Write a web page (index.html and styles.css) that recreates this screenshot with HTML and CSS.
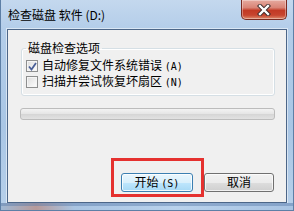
FILE: index.html
```html
<!DOCTYPE html>
<html lang="zh-CN">
<head>
<meta charset="utf-8">
<title>检查磁盘 软件 (D:)</title>
<link rel="stylesheet" href="styles.css">
</head>
<body>
<div class="window">
  <div class="titlebar">
    <span class="title">检查磁盘 软件 (D:)</span>
    <button class="close" aria-label="关闭">
      <svg width="16" height="12" viewBox="0 0 16 12">
        <path d="M4 2 L12 10 M12 2 L4 10" stroke="#3a2a2a" stroke-width="4.2" stroke-linecap="square" fill="none"/>
        <path d="M4 2 L12 10 M12 2 L4 10" stroke="#ffffff" stroke-width="2.4" stroke-linecap="square" fill="none"/>
      </svg>
    </button>
  </div>
  <div class="client">
    <fieldset class="group">
      <legend>磁盘检查选项</legend>
      <label class="check-row">
        <span class="box checked">
          <svg width="9" height="9" viewBox="0 0 9 9"><path d="M1 4.5 L3.5 7.5 L8 1" stroke="#4a5f97" stroke-width="1.8" fill="none"/></svg>
        </span>
        <span class="label">自动修复文件系统错误 <span class="key">(A)</span></span>
      </label>
      <label class="check-row">
        <span class="box"></span>
        <span class="label">扫描并尝试恢复坏扇区 <span class="key">(N)</span></span>
      </label>
    </fieldset>
    <div class="progress"></div>
    <div class="spacer"></div>
    <div class="buttons">
      <div class="highlight-wrap">
        <button class="btn default">开始 <span class="key">(S)</span></button>
        <div class="highlight"></div>
      </div>
      <button class="btn">取消</button>
    </div>
  </div>
  <div class="bottom-frame"></div>
</div>
</body>
</html>
```
FILE: styles.css
```css
html, body {
  margin: 0;
  padding: 0;
}
body {
  width: 294px;
  height: 211px;
  overflow: hidden;
  font-family: "Noto Sans CJK SC", "Liberation Sans", sans-serif;
  font-size: 12px;
  color: #000;
}
.window {
  box-sizing: border-box;
  width: 294px;
  height: 211px;
  display: flex;
  flex-direction: column;
  padding: 0 6px 0 6px;
  border: 1px solid #5d7fa6;
  border-top: none;
  background:
    linear-gradient(180deg, #c4d8ee 0%, #b3cde9 14%, #a9c6e5 60%, #b7d0ea 100%);
}
.titlebar {
  height: 29px;
  display: flex;
  align-items: flex-start;
  position: relative;
}
.title {
  margin-top: 8px;
  margin-left: 1px;
  line-height: 14px;
  color: #000;
  font-size: 12px;
}
.close {
  margin-left: auto;
  margin-right: 0;
  width: 46px;
  height: 20px;
  padding: 0;
  border: 1px solid #7a2b22;
  border-top: none;
  border-radius: 0 0 5px 5px;
  background: linear-gradient(180deg, #e6aa9f 0%, #d98476 40%, #c23a25 55%, #c7452f 80%, #dc8c6e 100%);
  display: flex;
  align-items: center;
  justify-content: center;
  box-shadow: inset 0 0 0 1px rgba(255,255,255,0.35);
}
.close svg {
  display: block;
}
.client {
  flex: 1;
  display: flex;
  flex-direction: column;
  background: #f0f0f0;
  border: 1px solid #4c6688;
  box-shadow: 0 0 0 1px rgba(255,255,255,0.5);
}
.bottom-frame {
  height: 7px;
  margin: 0 -6px;
  background: linear-gradient(90deg, #9fb8d4 0%, #b79a9a 12%, #a9c4e2 25%, #b9d2ec 60%, #a8c3e2 100%);
  box-shadow: inset 0 3px 0 rgba(90,125,170,0.45);
}
.group {
  margin: 11px 11px 0 13px;
  padding: 3px 4px 5px 4px;
  border: 1px solid #d5dfe5;
  border-radius: 3px;
  box-shadow: inset 0 0 0 1px #ffffff;
  min-width: 0;
}
.group legend {
  padding: 0 2px;
  line-height: 14px;
  font-size: 12px;
}
.check-row {
  display: flex;
  align-items: center;
  height: 16px;
  gap: 4px;
}
.box {
  box-sizing: border-box;
  width: 12px;
  height: 12px;
  border: 1px solid #8e8f8f;
  background: linear-gradient(135deg, #dcdcdc 0%, #f4f4f4 70%, #ffffff 100%);
  box-shadow: inset 0 0 0 1px #f5f5f5;
  display: flex;
  align-items: center;
  justify-content: center;
}
.box svg {
  display: block;
}
.label {
  line-height: 14px;
  white-space: nowrap;
}
.key {
  font-family: "DejaVu Sans Mono", "Liberation Mono", monospace;
  font-size: 10px;
}
.progress {
  margin: 12px 11px 0 12px;
  height: 10px;
  border: 1px solid #bcbcbc;
  border-radius: 3px;
  background: linear-gradient(180deg, #f3f3f3 0%, #e6e6e6 45%, #d6d6d6 55%, #e2e2e2 100%);
}
.spacer {
  flex: 1;
}
.buttons {
  display: flex;
  justify-content: flex-end;
  gap: 11px;
  margin: 0 12px 10px 0;
}
.highlight-wrap {
  position: relative;
}
.btn {
  box-sizing: border-box;
  height: 19px;
  width: 70px;
  padding: 0;
  border: 1px solid #707070;
  border-radius: 3px;
  font-family: "Noto Sans CJK SC", "Liberation Sans", sans-serif;
  font-size: 12px;
  line-height: 14px;
  color: #000;
  background: linear-gradient(180deg, #f2f2f2 0%, #ebebeb 50%, #dddddd 51%, #cfcfcf 100%);
  box-shadow: inset 0 0 0 1px rgba(255,255,255,0.7);
}
.btn.default {
  width: 72px;
  border-color: #3c7fb1;
  background: linear-gradient(180deg, #eaf6fd 0%, #d9f0fc 50%, #bee6fd 51%, #a7d9f5 100%);
  box-shadow: inset 0 0 0 1px rgba(255,255,255,0.8);
}
.highlight {
  position: absolute;
  left: -10px;
  top: -15px;
  width: 93px;
  height: 39px;
  box-sizing: border-box;
  border: 3px solid #e5312f;
  pointer-events: none;
}
```
